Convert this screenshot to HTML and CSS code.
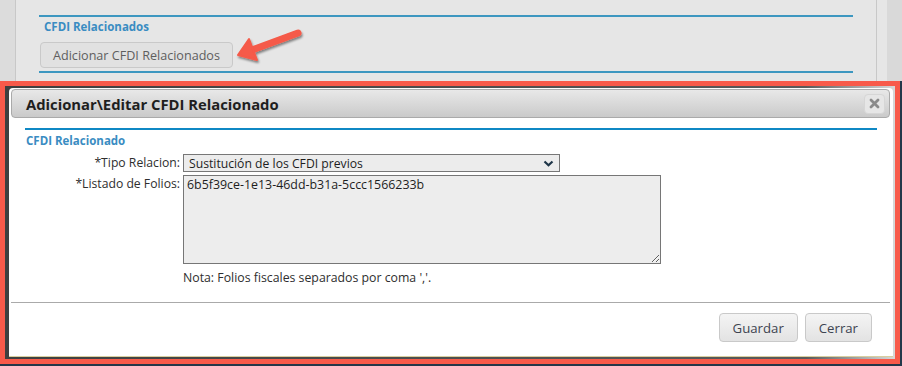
FILE: index.html
```html
<!DOCTYPE html>
<html lang="es">
<head>
    <meta charset="UTF-8">
    <meta name="viewport" content="width=device-width, initial-scale=1.0">
    <title>Adicionar CFDI Relacionado</title>
    <link rel="stylesheet" href="styles.css">
</head>
<body>

    <div class="page">
        <!-- pagina de fondo -->
        <div class="backdrop">
            <div class="side-left"></div>
            <div class="main">
                <div class="section">
                    <div class="section-title">CFDI Relacionados</div>
                    <button class="btn-add">Adicionar CFDI Relacionados</button>
                </div>
            </div>
            <div class="side-right"></div>

            <!-- flecha de anotacion -->
            <svg class="arrow" width="902" height="81" viewBox="0 0 902 81">
                <defs>
                    <filter id="arrowShadow" x="-20%" y="-40%" width="140%" height="180%">
                        <feDropShadow dx="1" dy="2" stdDeviation="1.2" flood-color="#000" flood-opacity="0.45"/>
                    </filter>
                </defs>
                <g filter="url(#arrowShadow)" fill="#f55a48" stroke="#f55a48">
                    <line x1="298" y1="33" x2="252" y2="50" stroke-width="7" stroke-linecap="round"/>
                    <polygon points="238,55 249,39 257,60" stroke-width="2" stroke-linejoin="round"/>
                </g>
            </svg>
        </div>

        <!-- dialogo resaltado -->
        <div class="frame">
            <div class="dialog">
                <div class="titlebar">
                    <span class="dialog-title">Adicionar\Editar CFDI Relacionado</span>
                    <button class="btn-close" title="Cerrar">
                        <svg width="11" height="11" viewBox="0 0 11 11">
                            <path d="M2 2 L9 9 M9 2 L2 9" stroke="#8a8a8a" stroke-width="2.8" stroke-linecap="round"/>
                        </svg>
                    </button>
                </div>

                <div class="content">
                    <div class="group">
                        <div class="group-title">CFDI Relacionado</div>
                        <div class="form-grid">
                            <label for="tipoRelacion">*Tipo Relacion:</label>
                            <div class="select-wrap">
                                <select id="tipoRelacion">
                                    <option>Sustitución de los CFDI previos</option>
                                    <option>Nota de crédito de los documentos relacionados</option>
                                    <option>Nota de débito de los documentos relacionados</option>
                                </select>
                                <svg class="chevron" width="11" height="7" viewBox="0 0 11 7">
                                    <path d="M1.5 1.5 L5.5 5.2 L9.5 1.5" fill="none" stroke="#1e3548" stroke-width="2.2"/>
                                </svg>
                            </div>

                            <label for="folios">*Listado de Folios:</label>
                            <div>
                                <textarea id="folios">6b5f39ce-1e13-46dd-b31a-5ccc1566233b</textarea>
                                <div class="note">Nota: Folios fiscales separados por coma ','.</div>
                            </div>
                        </div>
                    </div>
                </div>

                <div class="buttonpane">
                    <button class="btn">Guardar</button>
                    <button class="btn">Cerrar</button>
                </div>
            </div>
        </div>

        <div class="taskbar"></div>
    </div>

</body>
</html>
```

FILE: styles.css
```css
body {
    margin: 0;
    font-family: "Open Sans", "DejaVu Sans", sans-serif;
    color: #333;
}

.page {
    width: 902px;
    height: 366px;
    overflow: hidden;
    background-color: #23384a;
}

/* fondo */
.backdrop {
    position: relative;
    display: flex;
    height: 81px;
    background-color: #e6e6e6;
}

.side-left {
    width: 15px;
    background-color: #dcdcdc;
    border-right: 1px solid #c8c8c8;
}

.main {
    flex: 1;
    padding: 15px 23px 0 23px;
}

.side-right {
    width: 25px;
    border-left: 1px solid #c8c8c8;
    background: linear-gradient(to right, #e6e6e6 10px, #d9d9d9 10px);
}

.section {
    border-top: 2px solid #3d97c0;
    border-bottom: 2px solid #3d97c0;
    padding: 2px 0 3px 0;
}

.section-title {
    padding-left: 5px;
    font-size: 11.5px;
    font-weight: bold;
    line-height: 16px;
    color: #3a8cc2;
}

.btn-add {
    display: block;
    margin: 7px 0 0 1px;
    height: 26px;
    padding: 0 12px;
    font-family: inherit;
    font-size: 12.6px;
    color: #5e5e5e;
    background-color: #e1e1e1;
    border: 1px solid #c9c9c9;
    border-radius: 4px;
}

.arrow {
    position: absolute;
    left: 0;
    top: 0;
    pointer-events: none;
}

/* marco rojo */
.frame {
    box-sizing: border-box;
    width: 900px;
    height: 283px;
    border: 5px solid #f85a4a;
    background: linear-gradient(to right, #3f3f3f, #5a5a5a 90%, #d8d8d8);
    padding: 2px 2px 0 4px;
}

.dialog {
    height: 269px;
    box-sizing: border-box;
    padding: 1px 3px 0 2px;
    background-color: #fff;
    border-bottom: 1px solid #d9cf9f;
    border-radius: 4px 4px 0 0;
}

.titlebar {
    display: flex;
    align-items: center;
    justify-content: space-between;
    height: 29px;
    box-sizing: border-box;
    padding: 0 4px 0 14px;
    border: 1px solid #aaa;
    border-radius: 4px;
    background: linear-gradient(#e8e8e8, #cacaca);
}

.dialog-title {
    font-size: 14.8px;
    font-weight: bold;
    color: #1e1e1e;
}

.btn-close {
    display: flex;
    align-items: center;
    justify-content: center;
    width: 21px;
    height: 20px;
    padding: 0;
    background-color: #e6e6e6;
    border: 1px solid #d6d6d6;
    border-radius: 4px;
}

.content {
    padding: 10px 13px 16px 14px;
}

.group {
    border-top: 2px solid #0f88c4;
}

.group-title {
    padding: 3px 0 0 1px;
    font-size: 11.5px;
    font-weight: bold;
    line-height: 16px;
    color: #3a8cc2;
}

.form-grid {
    display: grid;
    grid-template-columns: 155px auto;
    justify-content: start;
    column-gap: 3px;
    row-gap: 3px;
    margin-top: 5px;
}

.form-grid label {
    text-align: right;
    font-size: 12.2px;
    line-height: 18px;
    color: #2e2e2e;
}

.select-wrap {
    position: relative;
    width: 377px;
}

select {
    display: block;
    width: 377px;
    height: 18px;
    padding: 0 0 0 5px;
    font-family: inherit;
    font-size: 12.2px;
    color: #1e1e1e;
    background-color: #ececec;
    border: 1px solid #777;
    border-radius: 0;
    appearance: none;
    -webkit-appearance: none;
    outline: none;
}

.chevron {
    position: absolute;
    right: 6px;
    top: 6px;
    pointer-events: none;
}

textarea {
    display: block;
    box-sizing: border-box;
    width: 478px;
    height: 89px;
    margin: 0;
    padding: 1px 3px;
    font-family: inherit;
    font-size: 12.4px;
    line-height: 16px;
    color: #1e1e1e;
    background-color: #ededed;
    border: 1px solid #767676;
    border-radius: 0;
    resize: both;
}

.note {
    margin-top: 6px;
    font-size: 12.3px;
    line-height: 16px;
    color: #2e2e2e;
}

.buttonpane {
    display: flex;
    justify-content: flex-end;
    gap: 7px;
    border-top: 1px solid #aaa;
    padding: 10px 18px 15px 0;
}

.btn {
    height: 29px;
    padding: 0 13px;
    font-family: inherit;
    font-size: 13.2px;
    color: #3d4450;
    background: linear-gradient(#f4f4f4, #e3e3e3);
    border: 1px solid #c9c9c9;
    border-radius: 4px;
}

.taskbar {
    height: 2px;
    background-color: #23384a;
}
```
